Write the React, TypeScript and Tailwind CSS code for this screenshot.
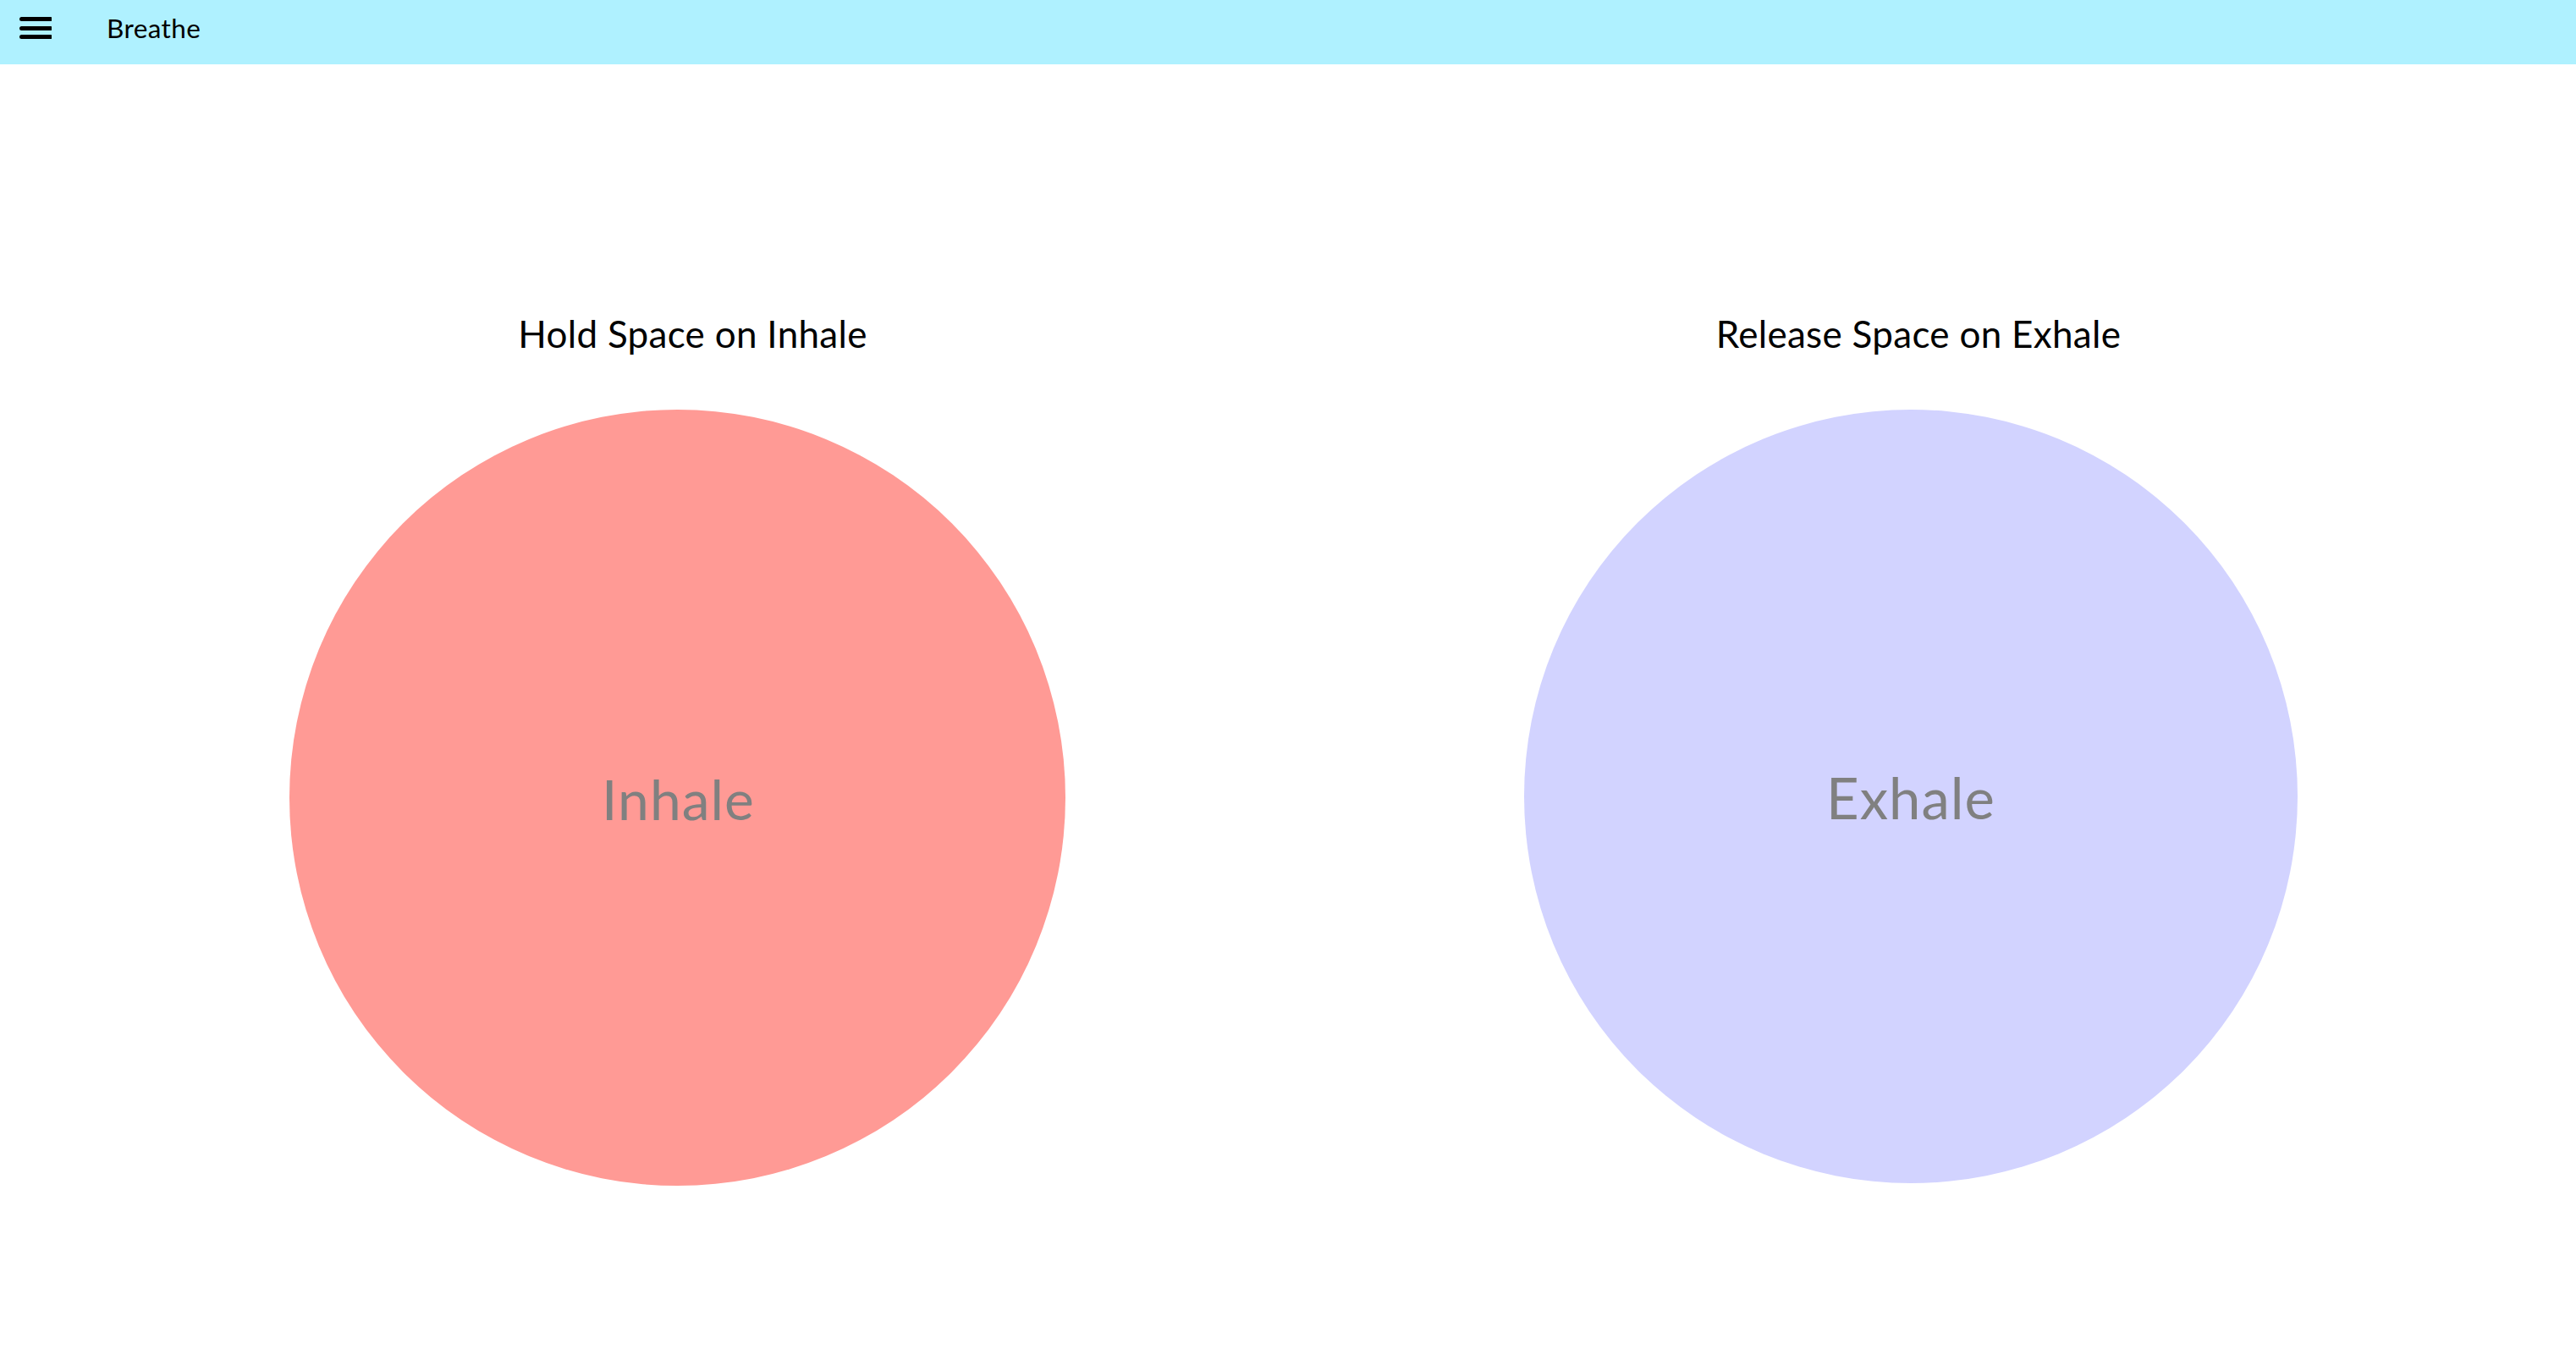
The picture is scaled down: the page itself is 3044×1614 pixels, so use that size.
import React from "react";

function Hamburger() {
  return (
    <svg width="40" height="30" viewBox="0 0 40 30" className="block">
      <g stroke="#000" strokeWidth="5" strokeLinecap="round">
        <line x1="4.5" y1="4.5" x2="38.5" y2="4.5" />
        <line x1="4.5" y1="15.5" x2="38.5" y2="15.5" />
        <line x1="4.5" y1="25.5" x2="38.5" y2="25.5" />
      </g>
    </svg>
  );
}

export default function App() {
  return (
    <div
      className="min-h-screen w-full bg-white text-black"
      style={{ fontFamily: "Lato, 'Noto Sans', 'Liberation Sans', sans-serif" }}
    >
      <header className="flex h-[76px] items-start bg-[#aff1ff] pl-[21px] pt-[18px]">
        <button className="flex items-center" aria-label="menu">
          <Hamburger />
        </button>
        <span className="ml-[65px] mt-[-5px] text-[31.5px] leading-[40px] tracking-[0.4px]">Breathe</span>
      </header>

      <main className="flex items-start pl-[342px] pt-[296px]">
        <section className="flex w-[917px] flex-col items-center">
          <h2 className="pl-[36px] text-[44px] font-normal leading-none tracking-[0.3px]">Hold Space on Inhale</h2>
          <div className="mt-[68px] flex h-[917px] w-[917px] items-center justify-center rounded-full bg-[#ff9a95]">
            <span className="pl-[2px] pt-[2px] text-[66px] leading-none tracking-[1px] text-[#808080]">Inhale</span>
          </div>
        </section>

        <section className="ml-[542px] flex w-[914px] flex-col items-center">
          <h2 className="pl-[18px] text-[44px] font-normal leading-none tracking-[0.3px]">Release Space on Exhale</h2>
          <div className="mt-[68px] flex h-[914px] w-[914px] items-center justify-center rounded-full bg-[#d2d3ff]">
            <span className="pt-[2px] text-[67px] leading-none tracking-[1px] text-[#808080]">Exhale</span>
          </div>
        </section>
      </main>
    </div>
  );
}
